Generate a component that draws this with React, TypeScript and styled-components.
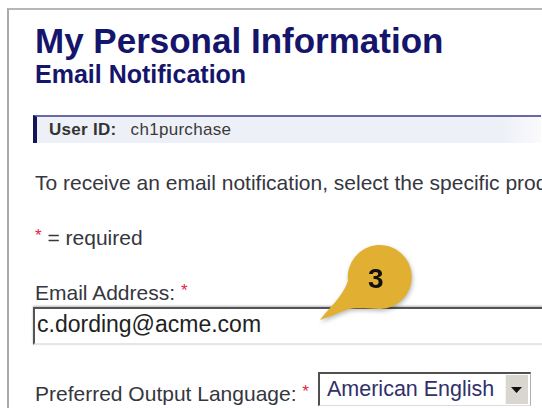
import styled, { createGlobalStyle } from 'styled-components';

const GlobalStyle = createGlobalStyle`
    html, body {
        margin: 0;
        padding: 0;
        background: #ffffff;
        overflow: hidden;
    }
    body {
        font-family: 'Liberation Sans', Arial, sans-serif;
    }
`
const StyledPage = styled.div`
    width: 542px;
    height: 408px;
    overflow: hidden;
    padding-top: 8px;
    padding-left: 7px;
    box-sizing: border-box;
`
const StyledFrame = styled.div`
    position: relative;
    width: 560px;
    height: 420px;
    border-top: 2px solid #b4b6b8;
    border-left: 2px solid #a8aaac;
    padding-left: 26px;
    box-sizing: border-box;
`
const StyledTitle = styled.h1`
    margin: 0;
    padding-top: 11px;
    font-size: 35px;
    line-height: 39px;
    font-weight: 700;
    color: #15156c;
`
const StyledSubtitle = styled.h2`
    margin: 0;
    font-size: 25px;
    line-height: 28px;
    font-weight: 700;
    color: #15156c;
`
const StyledUserBar = styled.div`
    margin-top: 27px;
    margin-left: -2px;
    width: 508px;
    height: 28px;
    display: flex;
    align-items: center;
    gap: 14px;
    background: linear-gradient(to right, #eef0f7 92%, #fafafc);
    border-top: 2px solid #6868a8;
    border-left: 4px solid #141456;
    padding-left: 12px;
    box-sizing: border-box;
    font-size: 17px;
    letter-spacing: 0.3px;
    color: #3a3a3a;
`
const StyledUserLabel = styled.span`
    font-weight: 700;
    color: #333;
`
const StyledText = styled.p`
    margin: 0;
    margin-top: ${({ $top }: { $top: number }) => $top}px;
    font-size: 21px;
    line-height: 24px;
    color: #363640;
    white-space: nowrap;
`
const StyledStar = styled.span`
    color: #e0244a;
    font-size: 17px;
    vertical-align: 4px;
`
const StyledInput = styled.div`
    margin-top: 2px;
    margin-left: -2px;
    width: 520px;
    height: 38px;
    border-top: 2px solid #555;
    border-left: 2px solid #555;
    border-bottom: 2px solid #e6e6e2;
    box-shadow: 0 -1px 2px rgba(0, 0, 0, 0.3);
    padding: 0 0 3px 2px;
    box-sizing: border-box;
    font-size: 23px;
    line-height: 31px;
    color: #222;
`
const StyledRow = styled.div`
    margin-top: 27px;
    display: flex;
    align-items: flex-end;
    gap: 9px;
`
const StyledSelect = styled.div`
    width: 213px;
    height: 34px;
    display: flex;
    align-items: center;
    justify-content: space-between;
    border-top: 2px solid #505050;
    border-left: 2px solid #505050;
    border-right: 1px solid #b0b0b0;
    border-bottom: 1px solid #dcdcdc;
    padding: 1px 2px 1px 7px;
    box-sizing: border-box;
    font-size: 21.5px;
    color: #30306a;
`
const StyledArrowButton = styled.div`
    width: 22px;
    height: 29px;
    background: #d8d6ce;
    border-left: 1px solid #f4f4f0;
    display: flex;
    align-items: center;
    justify-content: center;
`
const StyledCallout = styled.div`
    position: absolute;
    left: 301px;
    top: 228px;
    width: 110px;
    height: 95px;
    filter: drop-shadow(1px 2px 2px rgba(0, 0, 0, 0.28));
`
const StyledCalloutNumber = styled.span`
    position: absolute;
    left: 58px;
    top: 25px;
    font-size: 28px;
    line-height: 32px;
    font-weight: 700;
    color: #111;
`

function Callout({ label }: { label: string }) {
    return (
        <StyledCallout>
            <svg width="110" height="95" viewBox="0 0 110 95">
                <path
                    d="M10 82 C20 68 32 60 38 43 A32 32 0 1 1 70 71 C58 71 46 69 36 72 C26 76 18 79 10 82 Z"
                    fill="#e1b033"
                />
            </svg>
            <StyledCalloutNumber>{label}</StyledCalloutNumber>
        </StyledCallout>
    )
}

export default function App(): JSX.Element {
    return (
        <StyledPage>
            <GlobalStyle />
            <StyledFrame>
                <StyledTitle>My Personal Information</StyledTitle>
                <StyledSubtitle>Email Notification</StyledSubtitle>
                <StyledUserBar>
                    <StyledUserLabel>User ID:</StyledUserLabel>
                    <span>ch1purchase</span>
                </StyledUserBar>
                <StyledText $top={28}>To receive an email notification, select the specific products</StyledText>
                <StyledText $top={29}><StyledStar>*</StyledStar> = required</StyledText>
                <StyledText $top={29}>Email Address: <StyledStar>*</StyledStar></StyledText>
                <StyledInput>c.dording@acme.com</StyledInput>
                <StyledRow>
                    <StyledText $top={0}>Preferred Output Language: <StyledStar>*</StyledStar></StyledText>
                    <StyledSelect>
                        <span>American English</span>
                        <StyledArrowButton>
                            <svg width="11" height="6" viewBox="0 0 11 6">
                                <path d="M0 0 H11 L5.5 6 Z" fill="#111" />
                            </svg>
                        </StyledArrowButton>
                    </StyledSelect>
                </StyledRow>
                <Callout label="3" />
            </StyledFrame>
        </StyledPage>
    )
}
